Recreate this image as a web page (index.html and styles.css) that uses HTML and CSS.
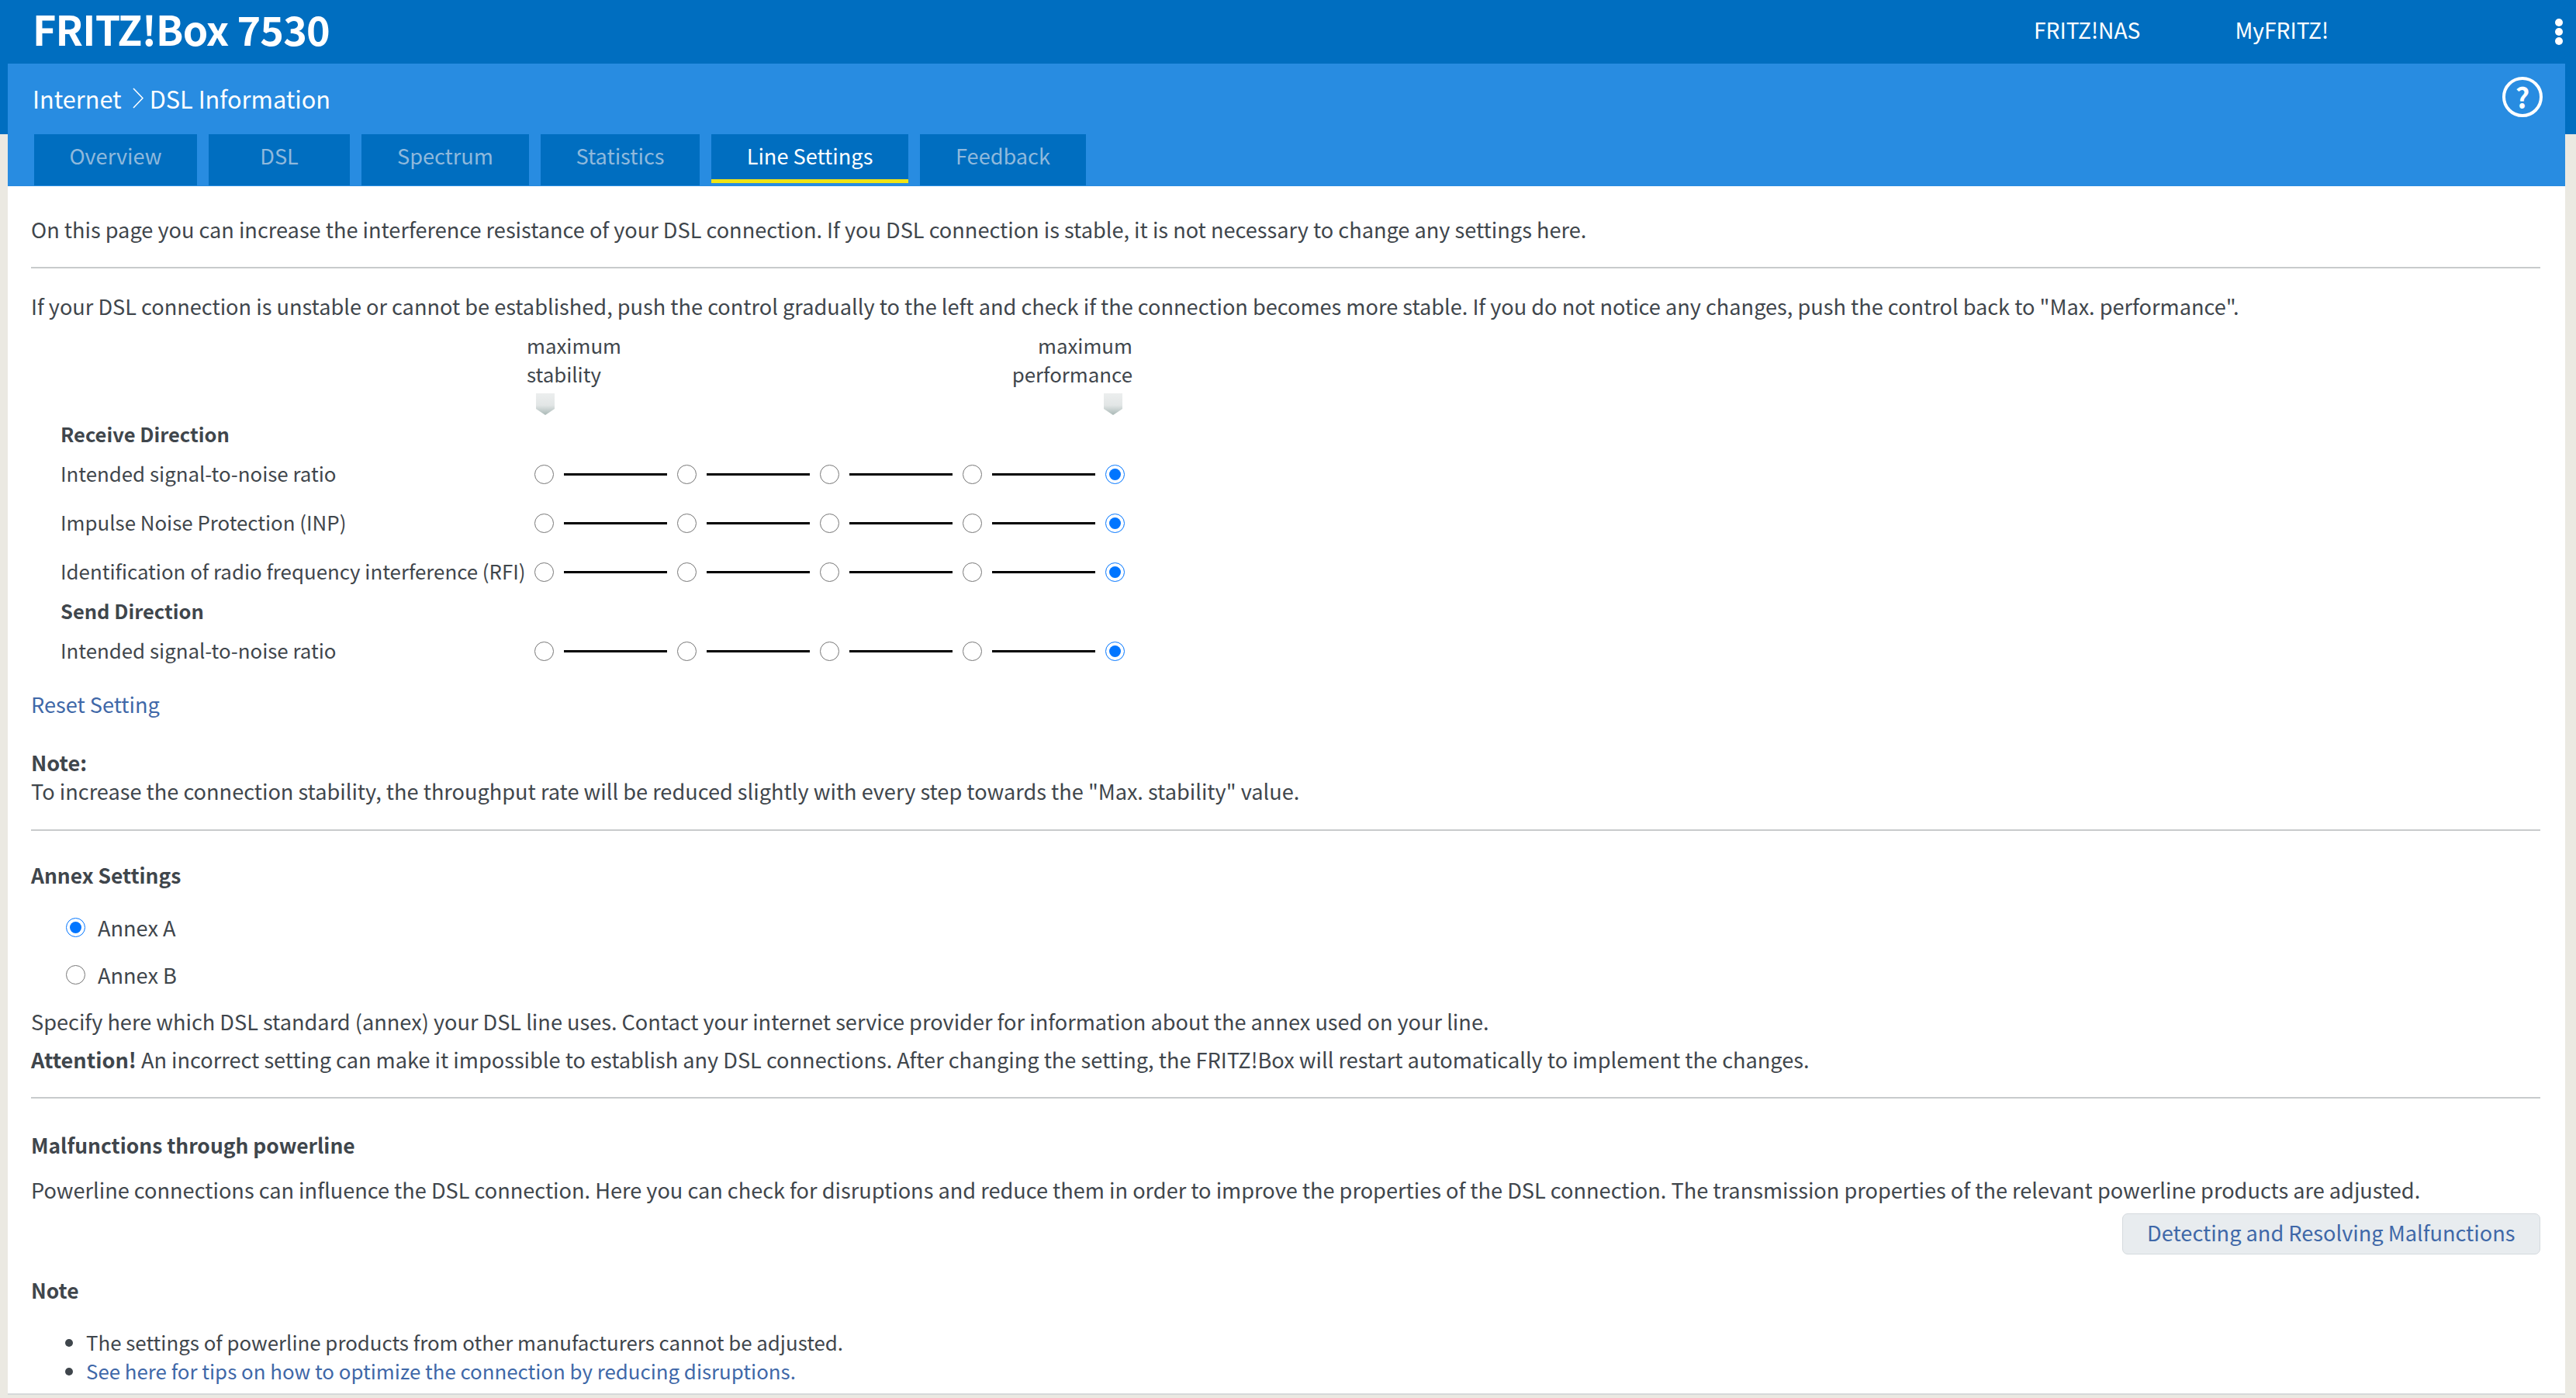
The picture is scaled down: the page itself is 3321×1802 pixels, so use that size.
FILE: index.html
```html
<!DOCTYPE html>
<html lang="en">
<head>
<meta charset="utf-8">
<title>FRITZ!Box 7530</title>
<link rel="stylesheet" href="styles.css">
</head>
<body>
<header class="topbar">
  <div class="brand">FRITZ!Box 7530</div>
  <nav class="topnav">
    <a class="topnav-nas">FRITZ!NAS</a>
    <a class="topnav-my">MyFRITZ!</a>
    <svg class="dots" width="12" height="36" viewBox="0 0 12 36"><circle cx="6" cy="6" r="5"/><circle cx="6" cy="18" r="5"/><circle cx="6" cy="30" r="5"/></svg>
  </nav>
</header>
<div class="shell">
  <section class="band">
    <div class="crumbrow">
      <div class="crumbs">Internet<svg class="chev" width="14" height="27" viewBox="0 0 14 27"><path d="M1 1l12 12.5L1 26"/></svg>DSL Information</div>
      <span class="help">?</span>
    </div>
    <nav class="tabs">
      <a class="tab t1">Overview</a>
      <a class="tab t2">DSL</a>
      <a class="tab t3">Spectrum</a>
      <a class="tab t4">Statistics</a>
      <a class="tab t5 active">Line Settings</a>
      <a class="tab t6">Feedback</a>
    </nav>
  </section>
  <main class="main">
    <p class="intro">On this page you can increase the interference resistance of your DSL connection. If you DSL connection is stable, it is not necessary to change any settings here.</p>
    <hr class="rule">
    <p class="para-a">If your DSL connection is unstable or cannot be established, push the control gradually to the left and check if the connection becomes more stable. If you do not notice any changes, push the control back to "Max. performance".</p>
    <div class="scale">
      <div class="scale-head">
        <div class="scale-end">maximum<br>stability<svg class="marker" width="24" height="28" viewBox="0 0 24 28"><defs><linearGradient id="mg" x1="0" y1="0" x2="0" y2="1"><stop offset="0" stop-color="#eceeee"/><stop offset="0.55" stop-color="#e2e6e6"/><stop offset="1" stop-color="#a9b8b6"/></linearGradient></defs><path d="M0 0h24v20l-12 8-12-8z" fill="url(#mg)"/></svg></div>
        <div class="scale-end right">maximum<br>performance<svg class="marker" width="24" height="28" viewBox="0 0 24 28"><path d="M0 0h24v20l-12 8-12-8z" fill="url(#mg)"/></svg></div>
      </div>
      <div class="sec">Receive Direction</div>
      <div class="srow"><label class="slabel">Intended signal-to-noise ratio</label><div class="slider"><input type="radio" name="a"><i></i><input type="radio" name="a"><i></i><input type="radio" name="a"><i></i><input type="radio" name="a"><i></i><input type="radio" name="a" checked></div></div>
      <div class="srow"><label class="slabel">Impulse Noise Protection (INP)</label><div class="slider"><input type="radio" name="b"><i></i><input type="radio" name="b"><i></i><input type="radio" name="b"><i></i><input type="radio" name="b"><i></i><input type="radio" name="b" checked></div></div>
      <div class="srow"><label class="slabel">Identification of radio frequency interference (RFI)</label><div class="slider"><input type="radio" name="c"><i></i><input type="radio" name="c"><i></i><input type="radio" name="c"><i></i><input type="radio" name="c"><i></i><input type="radio" name="c" checked></div></div>
      <div class="sec">Send Direction</div>
      <div class="srow"><label class="slabel">Intended signal-to-noise ratio</label><div class="slider"><input type="radio" name="d"><i></i><input type="radio" name="d"><i></i><input type="radio" name="d"><i></i><input type="radio" name="d"><i></i><input type="radio" name="d" checked></div></div>
    </div>
    <a class="link reset">Reset Setting</a>
    <p class="note"><b class="semi">Note:</b><br>To increase the connection stability, the throughput rate will be reduced slightly with every step towards the "Max. stability" value.</p>
    <hr class="rule rule-note">
    <h2 class="head annex-head">Annex Settings</h2>
    <label class="annex"><input type="radio" name="annex" checked>Annex A</label>
    <label class="annex"><input type="radio" name="annex">Annex B</label>
    <p class="spec">Specify here which DSL standard (annex) your DSL line uses. Contact your internet service provider for information about the annex used on your line.</p>
    <p class="attn"><b class="semi">Attention!</b> An incorrect setting can make it impossible to establish any DSL connections. After changing the setting, the FRITZ!Box will restart automatically to implement the changes.</p>
    <hr class="rule">
    <h2 class="head mal-head">Malfunctions through powerline</h2>
    <p class="pl">Powerline connections can influence the DSL connection. Here you can check for disruptions and reduce them in order to improve the properties of the DSL connection. The transmission properties of the relevant powerline products are adjusted.</p>
    <div class="btnrow"><a class="btn">Detecting and Resolving Malfunctions</a></div>
    <h2 class="head note-head">Note</h2>
    <ul class="list">
      <li>The settings of powerline products from other manufacturers cannot be adjusted.</li>
      <li><a class="link">See here for tips on how to optimize the connection by reducing disruptions.</a></li>
    </ul>
  </main>
</div>
</body>
</html>
```
FILE: styles.css
```css
* { box-sizing: border-box; }
html, body { margin: 0; padding: 0; height: 100%; overflow: hidden; }
body {
  background: linear-gradient(#006ec0 0, #006ec0 173px, #ebe9e2 173px);
  color: #3f464c;
  font-family: "Noto Sans CJK SC", "Source Sans Pro", "Noto Sans", sans-serif;
  font-size: 27.15px;
  line-height: 37px;
}
p { margin: 0; }

.topbar { height: 82px; display: flex; justify-content: space-between; color: #fff; padding-left: 42px; }
.brand { font-size: 52px; letter-spacing: -0.8px; font-weight: 700; line-height: 74px; }
.topnav { display: flex; align-items: flex-start; line-height: 76px; font-size: 28.2px; }
.topnav-nas { margin-right: 122px; }
.topnav-my { margin-right: 319px; }
.dots { fill: #fff; position: absolute; right: 16px; top: 23px; }

.shell { margin: 0 14px 0 10px; }
.band { height: 158px; background: #288ce1; color: #fff; display: flex; flex-direction: column; justify-content: space-between; }
.crumbrow { display: flex; justify-content: space-between; padding: 17px 29px 0 32px; }
.crumbs { font-size: 30.7px; line-height: 50px; display: flex; align-items: center; height: 50px; padding-top: 5px; }
.chev { margin: 0 8px 0 14px; fill: none; stroke: #fff; stroke-width: 1.6; }
.help { width: 52px; height: 52px; border: 4px solid #fff; border-radius: 50%; font-size: 36px; font-weight: 700; line-height: 42px; text-align: center; }
.tabs { display: flex; gap: 15px; padding-left: 34px; padding-bottom: 1px; }
.tab { height: 66px; background: #006ec0; color: #8fb9dc; text-align: center; line-height: 55px; font-size: 27.15px; }
.t1 { width: 210px; } .t2 { width: 182px; } .t3 { width: 216px; } .t4 { width: 205px; } .t5 { width: 254px; } .t6 { width: 214px; }
.tab.active { color: #fff; border-bottom: 5px solid #f0e414; box-shadow: inset 0 -3px 0 #006ec0; height: 63px; }

.main { background: #fff; height: 1558px; padding: 37px 32px 0 30px; border-bottom: 2px solid #d6d9da; }
.rule { border: 0; height: 2px; background: #c8cbcc; margin: 30px 0 0; }
.rule-note { margin-top: 31px; }
.para-a { margin-top: 30px; }

.scale { width: 1420px; margin-top: 13px; font-size: 25.85px; }
.scale-head { display: flex; justify-content: space-between; width: 781px; margin-left: 639px; height: 115px; line-height: 37px; }
.scale-end { position: relative; }
.scale-end.right { text-align: right; }
.marker { display: block; margin: 7px 0 0 12px; }
.scale-end.right .marker { margin: 7px 13px 0 auto; }
.sec { height: 39px; line-height: 35px; margin-left: 38px; font-weight: 600; font-size: 25.5px; }
.srow { height: 63px; display: flex; align-items: center; }
.slabel { width: 649px; padding: 0 0 4px 38px; white-space: nowrap; }
.slider { display: flex; align-items: center; }
.slider input { flex: none; width: 25px; height: 25px; margin: 0; }
.slider i { flex: none; width: 133px; height: 3px; background: #000; margin: 0 13.5px 0 12.5px; }

.link { color: #3f68a8; }
.reset { display: block; margin-top: 18px; }
.note { margin-top: 38px; }
.semi { font-weight: 600; }
.head { margin: 0; font-size: 26.4px; font-weight: 600; }
.annex-head { margin-top: 38px; }
.annex { display: flex; align-items: center; height: 61px; padding-left: 45px; }
.annex-head + .annex { margin-top: 19px; }
.annex input { width: 25px; height: 25px; margin: 0 16px 0 0; }
.spec { margin-top: 11px; }
.attn { margin-top: 12px; }
.mal-head { margin-top: 41px; }
.pl { margin-top: 21px; }
.btnrow { display: flex; justify-content: flex-end; margin-top: 12px; }
.btn { height: 53px; line-height: 48px; padding: 0 31.5px; background: #e8ecef; border: 1px solid #d5dade; border-radius: 7px; color: #3f68a8; }
.note-head { margin-top: 27px; }
.list { margin: 30px 0 0; padding: 0 0 0 71px; font-size: 25.85px; }
```
